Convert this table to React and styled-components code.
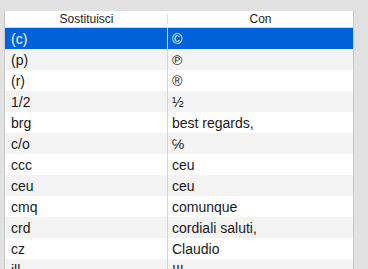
import React from 'react';
import styled, { createGlobalStyle } from 'styled-components';

const GlobalStyle = createGlobalStyle`
  html, body {
    margin: 0;
    padding: 0;
    background: #e1e1e1;
    overflow: hidden;
  }
`;

const rows = [
  ['(c)', '©'],
  ['(p)', '℗'],
  ['(r)', '®'],
  ['1/2', '½'],
  ['brg', 'best regards,'],
  ['c/o', '℅'],
  ['ccc', 'ceu'],
  ['ceu', 'ceu'],
  ['cmq', 'comunque'],
  ['crd', 'cordiali saluti,'],
  ['cz', 'Claudio'],
  ['ill', '!!!'],
];

const Page = styled.div`
  padding: 11px 14px 0 4px;
  height: 269px;
  box-sizing: border-box;
  overflow: hidden;
  font-family: 'Liberation Sans', Arial, sans-serif;
`;

const Table = styled.div`
  display: flex;
  flex-direction: column;
  width: 350px;
  min-height: 100%;
  background: #ffffff;
  border-left: 1px solid #c9c9c9;
  border-right: 1px solid #c9c9c9;
  box-sizing: border-box;
`;

const Header = styled.div`
  display: flex;
  flex-shrink: 0;
  height: 16px;
  border-bottom: 1px solid #d6d6d6;
  background: #ffffff;
`;

const HeaderCell = styled.div`
  width: ${(p) => p.$width || 'auto'};
  flex: ${(p) => (p.$width ? 'none' : 1)};
  display: flex;
  align-items: center;
  justify-content: center;
  font-size: 12px;
  color: #1e1e1e;
  position: relative;
  &::after {
    content: '';
    display: ${(p) => (p.$divider ? 'block' : 'none')};
    position: absolute;
    right: 0;
    top: 3px;
    bottom: 3px;
    width: 1px;
    background: #dcdcdc;
  }
`;

const Row = styled.div`
  display: flex;
  flex-shrink: 0;
  height: 21px;
  background: ${(p) => (p.$selected ? '#0062d9' : p.$odd ? '#f3f3f3' : '#ffffff')};
  color: ${(p) => (p.$selected ? '#ffffff' : '#1a1a1a')};
`;

const Cell = styled.div`
  width: ${(p) => p.$width || 'auto'};
  flex: ${(p) => (p.$width ? 'none' : 1)};
  box-sizing: border-box;
  display: flex;
  align-items: center;
  padding-left: ${(p) => (p.$first ? '6px' : '4px')};
  font-size: 14px;
  white-space: nowrap;
  overflow: hidden;
  border-right: ${(p) => (p.$first ? '1px solid #d6d6d6' : 'none')};
`;

export default function App() {
  return (
    <>
      <GlobalStyle />
      <Page>
        <Table>
          <Header>
            <HeaderCell $width="163px" $divider>Sostituisci</HeaderCell>
            <HeaderCell>Con</HeaderCell>
          </Header>
          {rows.map(([from, to], i) => (
            <Row key={from} $selected={i === 0} $odd={i % 2 === 1}>
              <Cell $width="163px" $first>{from}</Cell>
              <Cell>{to}</Cell>
            </Row>
          ))}
        </Table>
      </Page>
    </>
  );
}
